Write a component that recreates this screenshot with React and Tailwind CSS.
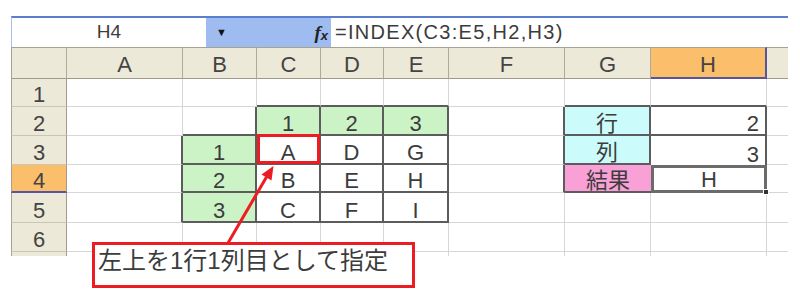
import React from "react";

const gr = "border-r border-r-[#d6d6d6]";
const gb = "border-b border-b-[#d6d6d6]";
const dr = "border-r-2 border-r-[#5c5c5c]";
const db = "border-b-2 border-b-[#5c5c5c]";
const base = "flex items-end justify-center pb-[1px] text-[22px] leading-[18px] text-[#3c3c3c] overflow-visible";
const right = "flex items-end justify-end pr-[6px] pb-[1px] text-[22px] leading-[18px] text-[#3c3c3c] overflow-visible";
const green = "bg-[#ccf3c6]";
const cyan = "bg-[#ccfbfb]";
const pink = "bg-[#f9a0d6]";

const colHead = "bg-[#ece9d8] border-r border-r-[#aeab9c] border-b border-b-[#9e9b8b] border-t border-t-[#a5a293] flex items-end justify-center pb-[4px] text-[22px] leading-[18px] text-[#444]";
const colHeadH = "bg-[#fbbf6b] border-r-2 border-r-[#5555a0] border-b-2 border-b-[#5555a0] border-t border-t-[#a5a293] flex items-end justify-center pb-[3px] text-[22px] leading-[18px] text-[#444]";
const rowHead = "bg-[#ece9d8] border-l border-l-[#a5a293] border-r border-r-[#9e9b8b] border-b border-b-[#c9c6b6] flex items-end justify-center pb-[2px] text-[22px] leading-[18px] text-[#444]";
const rowHead4 = "bg-[#fbbf6b] border-l border-l-[#a5a293] border-r border-r-[#9e9b8b] border-b-2 border-b-[#5555a0] flex items-end justify-center pb-[1px] text-[22px] leading-[18px] text-[#444]";

function C({ c, t, children }) {
  return (
    <div className={c}>
      {t}
      {children}
    </div>
  );
}

export default function App() {
  return (
    <div className="relative w-[800px] h-[308px] overflow-hidden bg-white font-[family-name:'Liberation_Sans','Noto_Sans_CJK_JP',sans-serif]">
      {/* Formula bar */}
      <div className="mt-[16px] ml-[11px] flex h-[31px] w-[777px] border-t-2 border-l border-t-[#5b7fcc] border-l-[#a9c0ec]">
        <div className="flex w-[194px] items-center justify-center bg-white pb-[1px] text-[19px] text-[#3c3c3c]">H4</div>
        <div className="flex w-[125px] items-center justify-between bg-[#9ebcf0] pl-[10px] pr-[3px]">
          <span className="text-[11px] text-[#111]">▼</span>
          <span className="flex items-end text-[#222]">
            <span className="font-[family-name:'Liberation_Serif',serif] text-[19px] italic font-bold leading-none">f</span>
            <span className="text-[13px] italic font-bold leading-none">x</span>
          </span>
        </div>
        <div className="flex flex-1 items-center bg-white pl-[4px] pb-[1px] text-[20px] tracking-[1.3px] text-[#3c3c3c]">=INDEX(C3:E5,H2,H3)</div>
      </div>

      {/* Sheet grid */}
      <div className="ml-[11px] grid w-[777px] grid-cols-[56px_116px_74px_64px_63px_65px_116px_86px_116px_21px] grid-rows-[32px_28px_29px_29px_28px_30px_29px_4px]">
        {/* header row */}
        <C c={"border-l border-l-[#a5a293] " + colHead} />
        <C c={colHead} t="A" />
        <C c={colHead} t="B" />
        <C c={colHead} t="C" />
        <C c={colHead} t="D" />
        <C c={colHead} t="E" />
        <C c={colHead} t="F" />
        <C c={colHead} t="G" />
        <C c={colHeadH} t="H" />
        <C c="bg-[#ece9d8] border-b border-b-[#9e9b8b] border-t border-t-[#a5a293]" />

        {/* row 1 */}
        <C c={rowHead} t="1" />
        <C c={`${base} ${gr} ${gb}`} />
        <C c={`${base} ${gr} ${gb}`} />
        <C c={`${base} ${gr} ${db}`} />
        <C c={`${base} ${gr} ${db}`} />
        <C c={`${base} ${gr} ${db}`} />
        <C c={`${base} ${gr} ${gb}`} />
        <C c={`${base} ${gr} ${db}`} />
        <C c={`${base} ${gr} ${db}`} />
        <C c={gb} />

        {/* row 2 */}
        <C c={rowHead} t="2" />
        <C c={`${base} ${gr} ${gb}`} />
        <C c={`${base} ${dr} ${db}`} />
        <C c={`${base} ${green} ${dr} ${db}`} t="1" />
        <C c={`${base} ${green} ${dr} ${db}`} t="2" />
        <C c={`${base} ${green} ${dr} ${db}`} t="3" />
        <C c={`${base} ${dr} ${gb}`} />
        <C c={`${base} ${cyan} ${dr} ${db}`} t="行" />
        <C c={`${right} ${dr} ${db}`} t="2" />
        <C c={gb} />

        {/* row 3 */}
        <C c={rowHead} t="3" />
        <C c={`${base} ${dr} ${gb}`} />
        <C c={`${base} ${green} ${dr} ${db}`} t="1" />
        <C c={`relative ${base} ${dr} ${db}`} t="A">
          <div className="absolute left-0 right-[-1px] top-[-2px] bottom-[-1px] border-[3px] border-[#ec1c24]" />
        </C>
        <C c={`${base} ${dr} ${db}`} t="D" />
        <C c={`${base} ${dr} ${db}`} t="G" />
        <C c={`${base} ${dr} ${gb}`} />
        <C c={`${base} ${cyan} ${dr} ${db}`} t="列" />
        <C c={`${right} ${dr}`} t="3" />
        <C c={gb} />

        {/* row 4 */}
        <C c={rowHead4} t="4" />
        <C c={`${base} ${dr} ${gb}`} />
        <C c={`${base} ${green} ${dr} ${db}`} t="2" />
        <C c={`${base} ${dr} ${db}`} t="B" />
        <C c={`${base} ${dr} ${db}`} t="E" />
        <C c={`${base} ${dr} ${db}`} t="H" />
        <C c={`${base} ${dr} ${gb}`} />
        <C c={`${base} ${pink} ${db}`} t="結果" />
        <C c={`relative ${base} border-[3px] border-[#6b6b6b]`} t="H">
          <div className="absolute right-[-5px] bottom-[-5px] h-[6px] w-[6px] border border-white bg-[#333]" />
        </C>
        <C c={gb} />

        {/* row 5 */}
        <C c={rowHead} t="5" />
        <C c={`${base} ${dr} ${gb}`} />
        <C c={`${base} ${green} ${dr} ${db}`} t="3" />
        <C c={`${base} ${dr} ${db}`} t="C" />
        <C c={`${base} ${dr} ${db}`} t="F" />
        <C c={`${base} ${dr} ${db}`} t="I" />
        <C c={`${base} ${gr} ${gb}`} />
        <C c={`${base} ${gr} ${gb}`} />
        <C c={`${base} ${gr} ${gb}`} />
        <C c={gb} />

        {/* row 6 */}
        <C c={rowHead} t="6" />
        <C c={`${base} ${gr} ${gb}`} />
        <C c={`${base} ${gr} ${gb}`} />
        <C c={`${base} ${gr} ${gb}`} />
        <C c={`${base} ${gr} ${gb}`} />
        <C c={`${base} ${gr} ${gb}`} />
        <C c={`${base} ${gr} ${gb}`} />
        <C c={`${base} ${gr} ${gb}`} />
        <C c={`${base} ${gr} ${gb}`} />
        <C c={gb} />

        {/* partial row 7 */}
        <C c="bg-[#ece9d8] border-l border-l-[#a5a293] border-r border-r-[#9e9b8b]" />
        <C c={gr} />
        <C c={gr} />
        <C c={gr} />
        <C c={gr} />
        <C c={gr} />
        <C c={gr} />
        <C c={gr} />
        <C c={gr} />
        <C c="" />
      </div>

      {/* arrow */}
      <svg className="absolute left-0 top-0" width="800" height="308" viewBox="0 0 800 308">
        <line x1="228" y1="243" x2="266.5" y2="177" stroke="#ec1c24" strokeWidth="3" />
        <polygon points="273.5,166 271.5,180.5 261.5,174.5" fill="#ec1c24" />
      </svg>

      {/* callout */}
      <div className="absolute left-[92px] top-[242px] flex h-[46px] w-[323px] items-start border-[3px] border-[#ec1c24] bg-white pl-[3px] pt-[4px] text-[24px] leading-none text-[#3c3c3c]">
        左上を1行1列目として指定
      </div>
    </div>
  );
}
